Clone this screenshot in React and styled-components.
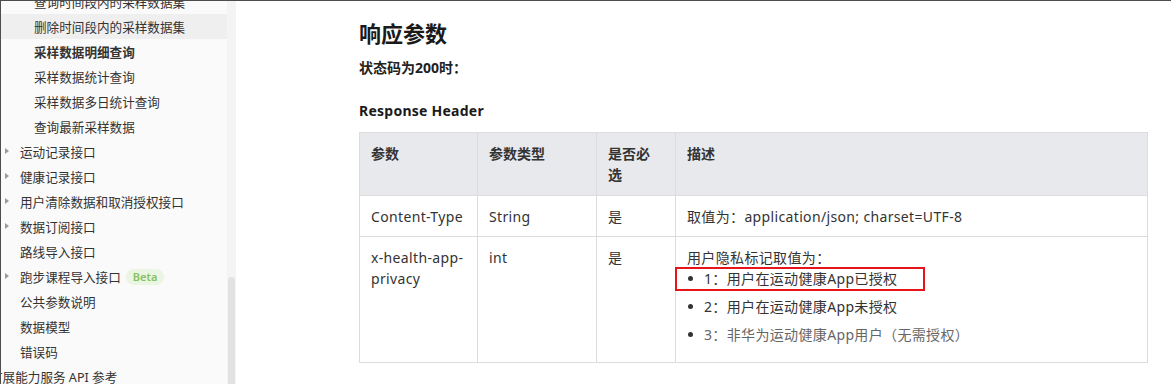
import React from "react";
import styled, { createGlobalStyle } from "styled-components";

const Global = createGlobalStyle`
  html, body { margin: 0; padding: 0; background: #fff; overflow: hidden; }
  body { font-family: "Noto Sans", "Noto Sans CJK SC", sans-serif; color: #333; }
  * { box-sizing: border-box; }
`;

const Frame = styled.div`
  display: flex;
  height: 384px;
  border-top: 1px solid #4d4d4d;
  border-left: 1px solid #4d4d4d;
  overflow: hidden;
`;

const Sidebar = styled.nav`
  width: 226px;
  flex: none;
  background: #fafafa;
  overflow: hidden;
`;

const NavList = styled.ul`
  list-style: none;
  margin: -12px 0 0 0;
  padding: 0;
`;

const NavItem = styled.li`
  position: relative;
  display: flex;
  align-items: center;
  height: 25px;
  padding-left: ${(p) => p.$indent}px;
  font-size: 12.6px;
  white-space: nowrap;
  color: #333;
  font-weight: ${(p) => (p.$active ? 700 : 400)};
  background: ${(p) => (p.$hover ? "#efefef" : "transparent")};
`;

const Label = styled.span`
  margin-left: ${(p) => p.$shift || 0}px;
`;

const Caret = styled.span`
  position: absolute;
  left: 4px;
  top: 9px;
  width: 0;
  height: 0;
  border-top: 3.5px solid transparent;
  border-bottom: 3.5px solid transparent;
  border-left: 4px solid #9a9a9a;
`;

const Beta = styled.span`
  display: inline-flex;
  align-items: center;
  height: 16px;
  margin-left: 5px;
  padding: 0 7px;
  border-radius: 8px;
  background: #eaf5e2;
  color: #86c25f;
  font-size: 11px;
  font-weight: 600;
`;

const Track = styled.div`
  width: 9px;
  flex: none;
  background: #f4f4f4;
  display: flex;
  flex-direction: column;
  padding: 276px 1px 0 1px;
`;

const Thumb = styled.div`
  flex: 1;
  background: #e2e2e2;
  border-radius: 4px 4px 0 0;
`;

const Main = styled.main`
  flex: 1;
  padding: 17px 23px 0 123px;
`;

const Title = styled.h2`
  margin: 0;
  font-size: 22px;
  line-height: 30px;
  font-weight: 700;
  color: #1a1a1a;
`;

const Status = styled.p`
  margin: 10px 0 0;
  font-size: 14px;
  line-height: 20px;
  font-weight: 700;
  color: #222;
`;

const SubTitle = styled.h3`
  margin: 23px 0 0;
  font-size: 14px;
  line-height: 20px;
  font-weight: 700;
  letter-spacing: 0.25px;
  color: #1a1a1a;
`;

const Table = styled.table`
  margin-top: 11px;
  width: 789px;
  border-collapse: collapse;
  table-layout: fixed;
  font-size: 14px;
  color: #333;
`;

const Th = styled.th`
  background: #e8e9ec;
  border: 1px solid #dcdcdc;
  text-align: left;
  vertical-align: top;
  padding: 10px 16px 10px 11px;
  font-size: 14px;
  line-height: 21px;
  font-weight: 700;
  color: #333;
`;

const Td = styled.td`
  border: 1px solid #dcdcdc;
  vertical-align: top;
  padding: 10px 11px 9px;
  line-height: 21px;
  letter-spacing: 0.35px;
`;

const DescText = styled.div`
  line-height: 21px;
`;

const Bullets = styled.ul`
  list-style: none;
  margin: 0 0 8px;
  padding: 0;
`;

const Bullet = styled.li`
  position: relative;
  padding-left: 17px;
  line-height: 21px;
  color: ${(p) => (p.$muted ? "#666" : "#333")};
  & + & { margin-top: 7px; }
  &::before {
    content: "";
    position: absolute;
    left: 1px;
    top: 8px;
    width: 5px;
    height: 5px;
    border-radius: 50%;
    background: #333;
  }
`;

const RedMark = styled.span`
  position: absolute;
  left: -12px;
  top: -1px;
  width: 250px;
  height: 24px;
  border: 2px solid #e8141c;
  pointer-events: none;
`;

const navItems = [
  { t: "查询时间段内的采样数据集", i: 33 },
  { t: "删除时间段内的采样数据集", i: 33, hover: true },
  { t: "采样数据明细查询", i: 33, active: true },
  { t: "采样数据统计查询", i: 33 },
  { t: "采样数据多日统计查询", i: 33 },
  { t: "查询最新采样数据", i: 33 },
  { t: "运动记录接口", i: 19, caret: true },
  { t: "健康记录接口", i: 19, caret: true },
  { t: "用户清除数据和取消授权接口", i: 19, caret: true },
  { t: "数据订阅接口", i: 19, caret: true },
  { t: "路线导入接口", i: 19 },
  { t: "跑步课程导入接口", i: 19, caret: true, beta: true },
  { t: "公共参数说明", i: 19 },
  { t: "数据模型", i: 19 },
  { t: "错误码", i: 19 },
  { t: "扩展能力服务 API 参考", i: 0, shift: -11 },
];

export default function App() {
  return (
    <>
      <Global />
      <Frame>
        <Sidebar>
          <NavList>
            {navItems.map((n) => (
              <NavItem key={n.t} $indent={n.i} $active={n.active} $hover={n.hover}>
                {n.caret && <Caret />}
                <Label $shift={n.shift}>{n.t}</Label>
                {n.beta && <Beta>Beta</Beta>}
              </NavItem>
            ))}
          </NavList>
        </Sidebar>
        <Track>
          <Thumb />
        </Track>
        <Main>
          <Title>响应参数</Title>
          <Status>状态码为200时：</Status>
          <SubTitle>Response Header</SubTitle>
          <Table>
            <colgroup>
              <col style={{ width: 118 }} />
              <col style={{ width: 119 }} />
              <col style={{ width: 79 }} />
              <col />
            </colgroup>
            <thead>
              <tr>
                <Th>参数</Th>
                <Th>参数类型</Th>
                <Th>是否必选</Th>
                <Th>描述</Th>
              </tr>
            </thead>
            <tbody>
              <tr>
                <Td>Content-Type</Td>
                <Td>String</Td>
                <Td>是</Td>
                <Td>取值为：application/json; charset=UTF-8</Td>
              </tr>
              <tr>
                <Td>x-health-app-privacy</Td>
                <Td>int</Td>
                <Td>是</Td>
                <Td>
                  <DescText>用户隐私标记取值为：</DescText>
                  <Bullets>
                    <Bullet>
                      1：用户在运动健康App已授权
                      <RedMark />
                    </Bullet>
                    <Bullet>2：用户在运动健康App未授权</Bullet>
                    <Bullet $muted>3：非华为运动健康App用户（无需授权）</Bullet>
                  </Bullets>
                </Td>
              </tr>
            </tbody>
          </Table>
        </Main>
      </Frame>
    </>
  );
}
